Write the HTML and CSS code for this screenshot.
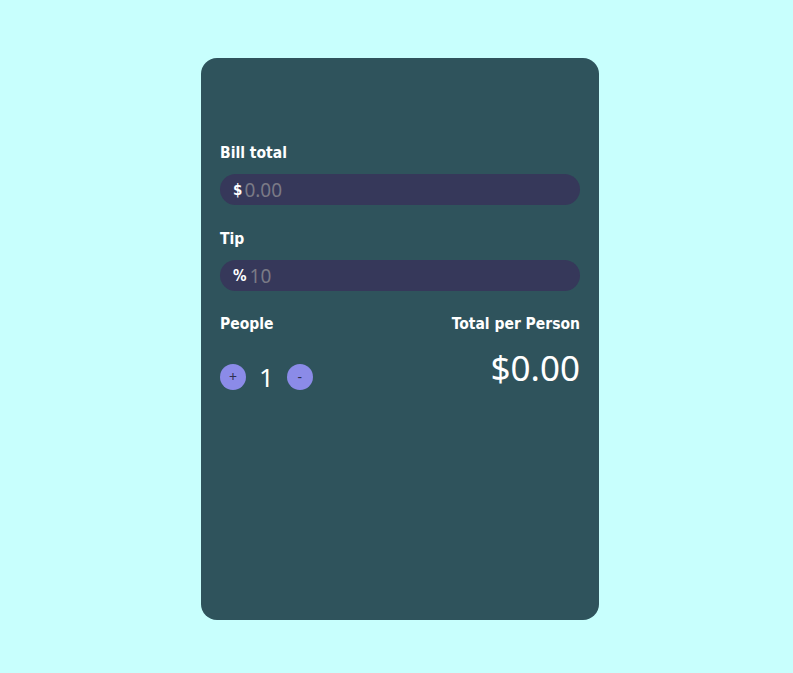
FILE: index.html
```
<!DOCTYPE html>
<html>
<head>
<meta charset="utf-8">
<link rel="stylesheet" href="styles.css">
</head>
<body>
<div class="page">
  <div class="card">
    <label class="label">Bill total</label>
    <div class="field">
      <span class="prefix">$</span>
      <input class="input" type="text" placeholder="0.00">
    </div>
    <label class="label tip-label">Tip</label>
    <div class="field">
      <span class="prefix pct">%</span>
      <input class="input" type="text" placeholder="10">
    </div>
    <div class="bottom">
      <div class="people">
        <div class="label">People</div>
        <div class="counter">
          <button class="btn">+</button>
          <span class="count">1</span>
          <button class="btn">-</button>
        </div>
      </div>
      <div class="total">
        <div class="label">Total per Person</div>
        <div class="amount">$0.00</div>
      </div>
    </div>
  </div>
</div>
</body>
</html>
```

FILE: styles.css
```
html, body {
  margin: 0;
  padding: 0;
  background: #c8fffd;
}
.page {
  display: flex;
  justify-content: center;
  padding-top: 58px;
  padding-left: 7px;
}
.card {
  width: 398px;
  height: 562px;
  box-sizing: border-box;
  padding: 86px 19px 0 19px;
  background: #2f535c;
  border-radius: 16px;
  display: flex;
  flex-direction: column;
  font-family: "Noto Sans", sans-serif;
}
.label {
  display: block;
  color: #ffffff;
  font-family: "DejaVu Sans Condensed", "DejaVu Sans", sans-serif;
  font-weight: bold;
  font-size: 15.5px;
  line-height: 19px;
}
.field {
  margin-top: 11px;
  height: 31px;
  border-radius: 16px;
  background: #36385a;
  display: flex;
  align-items: center;
  padding-left: 13px;
}
.prefix {
  color: #fff;
  font-family: "DejaVu Sans Condensed", "DejaVu Sans", sans-serif;
  font-weight: bold;
  font-size: 15px;
}
.pct { margin-right: 1px; }
.input {
  flex: 1;
  border: none;
  background: transparent;
  outline: none;
  color: #fff;
  font-family: "Noto Sans", sans-serif;
  font-size: 19px;
  padding: 0;
  margin-left: 2px;
}
.input::placeholder { color: #7a7a86; }
.tip-label { margin-top: 25px; }
.bottom {
  margin-top: 24px;
  display: flex;
  justify-content: space-between;
}
.counter {
  margin-top: 28px;
  display: flex;
  align-items: center;
  gap: 13px;
}
.btn {
  width: 26px;
  height: 26px;
  border-radius: 50%;
  border: none;
  background: #8b8be8;
  color: #2f3050;
  font-family: "Noto Sans", sans-serif;
  font-size: 14px;
  padding: 0;
  line-height: 26px;
}
.count {
  color: #fff;
  font-size: 26px;
  line-height: 30px;
}
.total {
  display: flex;
  flex-direction: column;
  align-items: flex-end;
}
.amount {
  margin-top: 14px;
  color: #fff;
  font-size: 35px;
  line-height: 40px;
}
```
